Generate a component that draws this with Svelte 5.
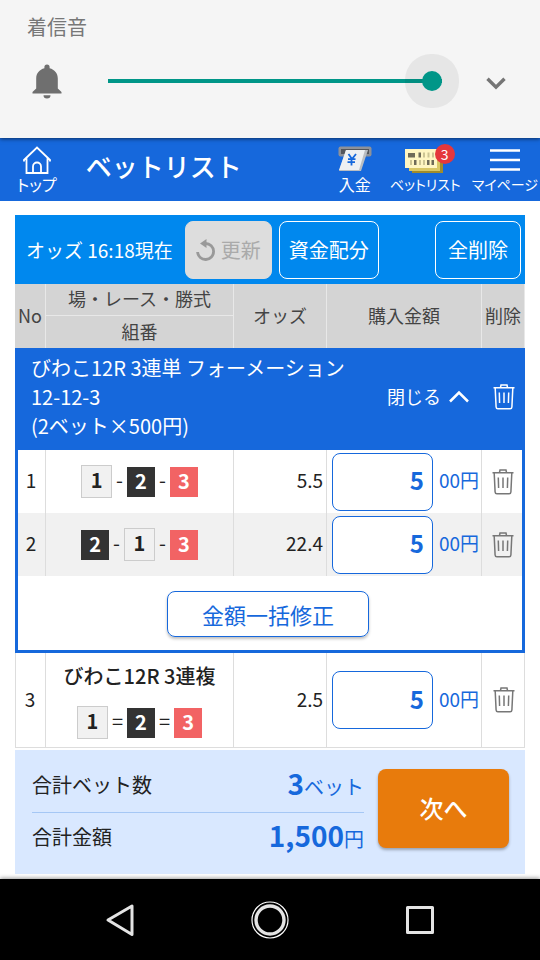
<script>
  let volume = $state(100);

  const single = [
    { no: 1, picks: [1, 2, 3], odds: '5.5' },
    { no: 2, picks: [2, 1, 3], odds: '22.4' }
  ];
  let amounts = $state({ 1: '5', 2: '5', 3: '5' });
</script>

{#snippet trash()}
  <svg width="22" height="26" viewBox="0 0 22 26" fill="none" stroke="currentColor" stroke-width="1.5" aria-hidden="true">
    <path d="M0.5 3.7H21.5M7.5 3.5L8 1h6l.5 2.5M2.2 4l.9 19q.1 1.8 1.8 1.8h12.2q1.7 0 1.8-1.8l.9-19M6.3 8.5l.3 10.5M11 8.5V19M15.7 8.5L15.4 19" />
  </svg>
{/snippet}

{#snippet combo(picks, mark)}
  <div class="combo">
    {#each picks as pick, i}
      {#if i > 0}<span class="mark">{mark}</span>{/if}
      <span class="chip chip{pick}">{pick}</span>
    {/each}
  </div>
{/snippet}

{#snippet stake(no)}
  <div class="stake">
    <input type="text" inputmode="numeric" id="amount{no}" bind:value={amounts[no]} />
    <label for="amount{no}">00円</label>
  </div>
{/snippet}

<div class="screen">
  <section class="volume">
    <label for="ringer">着信音</label>
    <div class="volume-row">
      <svg class="bell" width="30" height="35" viewBox="0 0 30 35" fill="#6f6f6f" aria-hidden="true">
        <path d="M15 0.5a2.6 2.6 0 0 1 2.6 2.6v1.2C22.6 5.600 25.800 9.300 25.800 14.500v10l3.700 3.600v1.400H.5v-1.400l3.700-3.600v-10C4.200 9.300 7.400 5.600 12.400 4.300V3.100A2.600 2.600 0 0 1 15 .5zM11.500 31.200h7a3.500 3.300 0 0 1-7 0z" />
      </svg>
      <input id="ringer" type="range" min="0" max="100" bind:value={volume} />
      <button class="expand" aria-label="展開">
        <svg width="20" height="13" viewBox="0 0 20 13" fill="none" stroke="#757575" stroke-width="3.400"><path d="M1.500 1.700L10 10.200l8.500-8.500" /></svg>
      </button>
    </div>
  </section>

  <header>
    <a class="nav" href="#top">
      <svg width="28" height="28" viewBox="0 0 28 28" fill="none" stroke="#fff" stroke-width="1.800" aria-hidden="true">
        <path d="M1 15.500v-1.500L14 1.500 27 14v1.500M3.500 12v15h21V12M10 27v-6.500a4 4 0 0 1 8 0V27" />
      </svg>
      <span>トップ</span>
    </a>
    <h1>ベットリスト</h1>
    <a class="nav deposit" href="#deposit">
      <svg width="34" height="28" viewBox="0 0 34 28" aria-hidden="true">
        <rect x="0.500" y="0.500" width="33" height="10" rx="2" fill="#8e9198" />
        <rect x="3" y="3" width="28" height="5" fill="#53565c" />
        <path d="M8 4h22l-7 21H1z" fill="#b9bdc2" />
        <path d="M8 4h19l-6 20H1z" fill="#eef0f2" />
        <path d="M10.500 8l3.500 5 4-5M13.500 13v6.500M10 13.200h7.500M9.500 16.200h7.500" fill="none" stroke="#1668dc" stroke-width="1.800" />
      </svg>
      <span>入金</span>
    </a>
    <a class="nav compact" href="#bets">
      <svg width="40" height="28" viewBox="0 0 40 28" aria-hidden="true">
        <path d="M7 7h31v20H7z" fill="#a08c2c" />
        <path d="M4 5h31v20H4z" fill="#d9c765" />
        <path d="M0 3h32v19H0z" fill="#fff6c2" />
        <path d="M3 7h7v4.500H3zM13.500 6.500h2.500v5h-2.500zM9 14h2.500v5H9zM22 14h2.500v5H22zM26.500 14H29v5h-2.500z" fill="#6f6b58" />
        <path d="M18 6.500h2v5h-2zM22.500 6.500h2v5h-2zM27 6.500h2v5h-2zM5 14h2v5H5zM14 14h2v5h-2zM18 14h2v5h-2z" fill="#cdc594" />
      </svg>
      <span>ベットリスト</span>
      <b class="badge">3</b>
    </a>
    <a class="nav compact" href="#mypage">
      <svg width="32" height="28" viewBox="0 0 32 28" fill="none" stroke="#fff" stroke-width="2.400" aria-hidden="true"><path d="M1 4.500h30M1 14h30M1 23.500h30" /></svg>
      <span>マイページ</span>
    </a>
  </header>

  <main>
    <div class="toolbar">
      <p>オッズ 16:18現在</p>
      <button class="refresh" disabled>
        <svg width="20" height="23" viewBox="0 0 20 23" aria-hidden="true">
          <path d="M1.600 13a8 8 0 1 0 8-8.500H7" fill="none" stroke="#999" stroke-width="2.800" />
          <path d="M4 4.500L10.500 0v9z" fill="#999" />
        </svg>
        更新
      </button>
      <button>資金配分</button>
      <button class="clear">全削除</button>
    </div>

    <table>
      <colgroup>
        <col class="c-no" /><col /><col class="c-odds" /><col class="c-stake" /><col class="c-del" />
      </colgroup>
      <thead>
        <tr><th rowspan="2">No</th><th class="split">場・レース・勝式</th><th rowspan="2">オッズ</th><th rowspan="2">購入金額</th><th rowspan="2">削除</th></tr>
        <tr><th>組番</th></tr>
      </thead>
      <tbody class="group">
        <tr class="group-head">
          <td colspan="5">
            <div class="group-bar">
              <div class="group-name">びわこ12R 3連単 フォーメーション<br />12-12-3<br />(2ベット×500円)</div>
              <button class="fold">
                閉じる
                <svg width="20" height="13" viewBox="0 0 20 13" fill="none" stroke="#fff" stroke-width="2.500"><path d="M1 11.500l9-9 9 9" /></svg>
              </button>
              <button class="del" aria-label="削除">{@render trash()}</button>
            </div>
          </td>
        </tr>
        {#each single as bet}
          <tr class="bet">
            <td class="no">{bet.no}</td>
            <td>{@render combo(bet.picks, '-')}</td>
            <td class="odds">{bet.odds}</td>
            <td>{@render stake(bet.no)}</td>
            <td><button class="del" aria-label="削除">{@render trash()}</button></td>
          </tr>
        {/each}
        <tr class="group-foot">
          <td colspan="5"><button class="bulk">金額一括修正</button></td>
        </tr>
      </tbody>
      <tbody class="plain">
        <tr class="bet">
          <td class="no">3</td>
          <td><div class="race">びわこ12R 3連複</div>{@render combo([1, 2, 3], '=')}</td>
          <td class="odds">2.5</td>
          <td>{@render stake(3)}</td>
          <td><button class="del" aria-label="削除">{@render trash()}</button></td>
        </tr>
      </tbody>
    </table>

    <section class="summary">
      <dl>
        <div><dt>合計ベット数</dt><dd><b>3</b>ベット</dd></div>
        <div><dt>合計金額</dt><dd><b>1,500</b>円</dd></div>
      </dl>
      <button class="next">次へ</button>
    </section>
  </main>

  <nav class="system">
    <button aria-label="戻る">
      <svg width="40" height="40" viewBox="0 0 40 40" fill="none" stroke="#e4e4e4" stroke-width="3" stroke-linejoin="round"><path d="M32 6v28.500L8 20z" /></svg>
    </button>
    <button aria-label="ホーム">
      <svg width="40" height="40" viewBox="0 0 40 40" fill="none" stroke="#e4e4e4"><circle cx="20" cy="20" r="14" stroke-width="3.400" /><circle cx="20" cy="20" r="18" stroke="#fff" stroke-width="1.200" /></svg>
    </button>
    <button aria-label="履歴">
      <svg width="40" height="40" viewBox="0 0 40 40" fill="none" stroke="#e4e4e4" stroke-width="3" stroke-linejoin="round"><path d="M7.500 7.500h25v25h-25z" /></svg>
    </button>
  </nav>
</div>

<style>
  :global(body) { margin: 0; }
  .screen {
    --blue: #1668dc;
    display: flex;
    flex-direction: column;
    min-height: 100vh;
    background: #fff;
    color: #222;
    font-family: "Noto Sans CJK JP", "Noto Sans", sans-serif;
    font-size: 20px;
    line-height: 30px;
  }
  .screen, .screen :global(*) { box-sizing: border-box; }
  button, input {
    margin: 0;
    padding: 0;
    border: 0;
    background: none;
    color: inherit;
    font: inherit;
  }
  svg { display: block; flex: none; }

  .volume {
    position: relative;
    z-index: 1;
    padding: 12px 34px 18px 27px;
    background: #f5f5f5;
    box-shadow: 0 1px 4px rgba(0, 0, 0, 0.55);
    color: #777;
  }
  .volume label { display: block; }
  .volume-row {
    display: flex;
    align-items: center;
    height: 78px;
  }
  .bell { margin-left: 5px; }
  input[type='range'] {
    flex: 1;
    min-width: 0;
    height: 20px;
    margin: 0 44px 0 46px;
    appearance: none;
    background: linear-gradient(#009688, #009688) center / 100% 4px no-repeat;
  }
  input[type='range']::-webkit-slider-thumb {
    appearance: none;
    width: 20px;
    height: 20px;
    border-radius: 50%;
    background: #009688;
    box-shadow: 0 0 0 17px rgba(0, 0, 0, 0.06);
  }
  .expand { padding-top: 4px; }

  header {
    display: flex;
    align-items: center;
    gap: 11px;
    height: 63px;
    padding: 0 2px 0 17px;
    background: var(--blue);
    color: #fff;
  }
  h1 {
    flex: 1;
    margin: 0 0 0 18px;
    padding-bottom: 7px;
    font-size: 26px;
    font-weight: 500;
    white-space: nowrap;
  }
  .nav {
    position: relative;
    display: flex;
    flex-direction: column;
    align-items: center;
    color: #fff;
    font-size: 16px;
    line-height: 20px;
    font-feature-settings: 'palt';
    text-decoration: none;
    white-space: nowrap;
  }
  .compact { font-size: 14px; }
  .deposit { width: 48px; }
  .badge {
    position: absolute;
    top: -2px;
    right: 6px;
    width: 20px;
    height: 20px;
    border-radius: 50%;
    background: #e5373c;
    font-size: 14px;
    font-weight: 400;
    text-align: center;
  }

  main { flex: 1; padding: 14px 15px 5px; }
  .toolbar {
    display: flex;
    align-items: center;
    gap: 7px;
    padding: 6px 4px 5px 11px;
    background: #0088ee;
    color: #fff;
  }
  .toolbar p { margin: 0 5px 0 0; font-size: 19px; white-space: nowrap; }
  .toolbar button {
    display: flex;
    align-items: center;
    justify-content: center;
    gap: 5px;
    height: 58px;
    padding: 0 9px;
    border: 1px solid #fff;
    border-radius: 8px;
    white-space: nowrap;
  }
  .toolbar .refresh { border-color: #ddd; background: #ddd; color: #aaa; padding: 0 10px; }
  .toolbar .clear { margin-left: auto; padding: 0 12px; }

  table {
    width: 100%;
    table-layout: fixed;
    border-collapse: separate;
    border-spacing: 0;
  }
  .c-no { width: 31px; }
  .c-odds { width: 93px; }
  .c-stake { width: 155px; }
  .c-del { width: 43px; }
  th {
    height: 32px;
    padding: 0 0 2px;
    border-right: 1px solid #e8e8e8;
    background: #d4d4d4;
    color: #444;
    font-size: 18px;
    font-weight: 400;
    line-height: 29px;
    white-space: nowrap;
  }
  .split { border-bottom: 1px solid #e8e8e8; }
  td { padding: 0; border-right: 1px solid #ddd; }
  .group-head td { padding: 5px 0 10px 16px; border: 0; background: var(--blue); color: #fff; line-height: 29px; }
  .group-bar { display: flex; align-items: center; }
  .group-name { flex: 1; min-width: 0; white-space: nowrap; }
  .fold {
    display: flex;
    align-items: center;
    gap: 8px;
    margin-right: 13px;
    font-size: 18px;
  }
  .del { display: block; width: 43px; color: #777; }
  .del :global(svg) { margin: 0 auto; }
  .group-bar .del { color: #fff; }
  .bet td { height: 63px; }
  .bet .no { padding: 0 1px 3px 0; text-align: center; font-size: 19px; }
  .group .no { border-left: 3px solid var(--blue); }
  .group .bet td:last-child { border-right: 3px solid var(--blue); }
  .group .bet .del { width: 41px; }
  .group .bet:nth-child(odd) { background: #f1f1f1; }
  .bet .odds { padding: 0 3px 3px 0; text-align: right; font-size: 19px; }
  .combo { display: flex; align-items: center; justify-content: center; gap: 4px; }
  .mark { padding-bottom: 3px; }
  .chip {
    width: 28px;
    height: 30px;
    font-weight: 700;
    line-height: 27px;
    text-align: center;
  }
  .chip1 { width: 31px; height: 33px; border: 1px solid #ccc; background: #f1f1f1; line-height: 28px; }
  .chip2 { background: #333; color: #fff; }
  .chip3 { background: #f26364; color: #fff; }
  .stake { display: flex; align-items: center; gap: 6px; padding-left: 5px; }
  .stake input {
    width: 101px;
    height: 58px;
    padding: 0 8px 4px 0;
    border: 1px solid var(--blue);
    border-radius: 8px;
    background: #fff;
    color: var(--blue);
    font-size: 24px;
    font-weight: 700;
    text-align: right;
  }
  .stake label { padding-bottom: 3px; color: var(--blue); font-size: 19px; white-space: nowrap; }
  .group-foot td {
    height: 77px;
    padding: 2px 4px 0 0;
    border: 3px solid var(--blue);
    border-top: 0;
    text-align: center;
  }
  .bulk {
    width: 202px;
    height: 46px;
    border: 1px solid var(--blue);
    border-radius: 8px;
    box-shadow: 0 2px 3px rgba(0, 0, 0, 0.25);
    color: var(--blue);
    font-size: 22px;
  }
  .plain td { height: 95px; border-bottom: 1px solid #ddd; }
  .plain .no { border-left: 1px solid #ddd; }
  .race { margin-bottom: 15px; font-weight: 500; text-align: center; }

  .summary {
    display: flex;
    align-items: center;
    gap: 14px;
    margin-top: 2px;
    padding: 8px 16px 8px 17px;
    background: #d9e8ff;
  }
  dl { flex: 1; margin: 0; }
  dl div { display: flex; align-items: center; justify-content: space-between; height: 54px; }
  dl div + div { padding-bottom: 5px; border-top: 1px solid #a5c7f5; }
  dd { margin: 0; color: var(--blue); }
  dd b { font-size: 28px; }
  .next {
    width: 131px;
    height: 79px;
    margin-bottom: 8px;
    border-radius: 8px;
    background: #e87b0c;
    box-shadow: 0 2px 3px rgba(0, 0, 0, 0.3);
    color: #fff;
    font-size: 24px;
    font-weight: 500;
  }

  .system {
    display: flex;
    justify-content: center;
    gap: 110px;
    padding: 21px 0 20px;
    background: #000;
    box-shadow: 0 -1px 4px rgba(0, 0, 0, 0.4);
  }
</style>
